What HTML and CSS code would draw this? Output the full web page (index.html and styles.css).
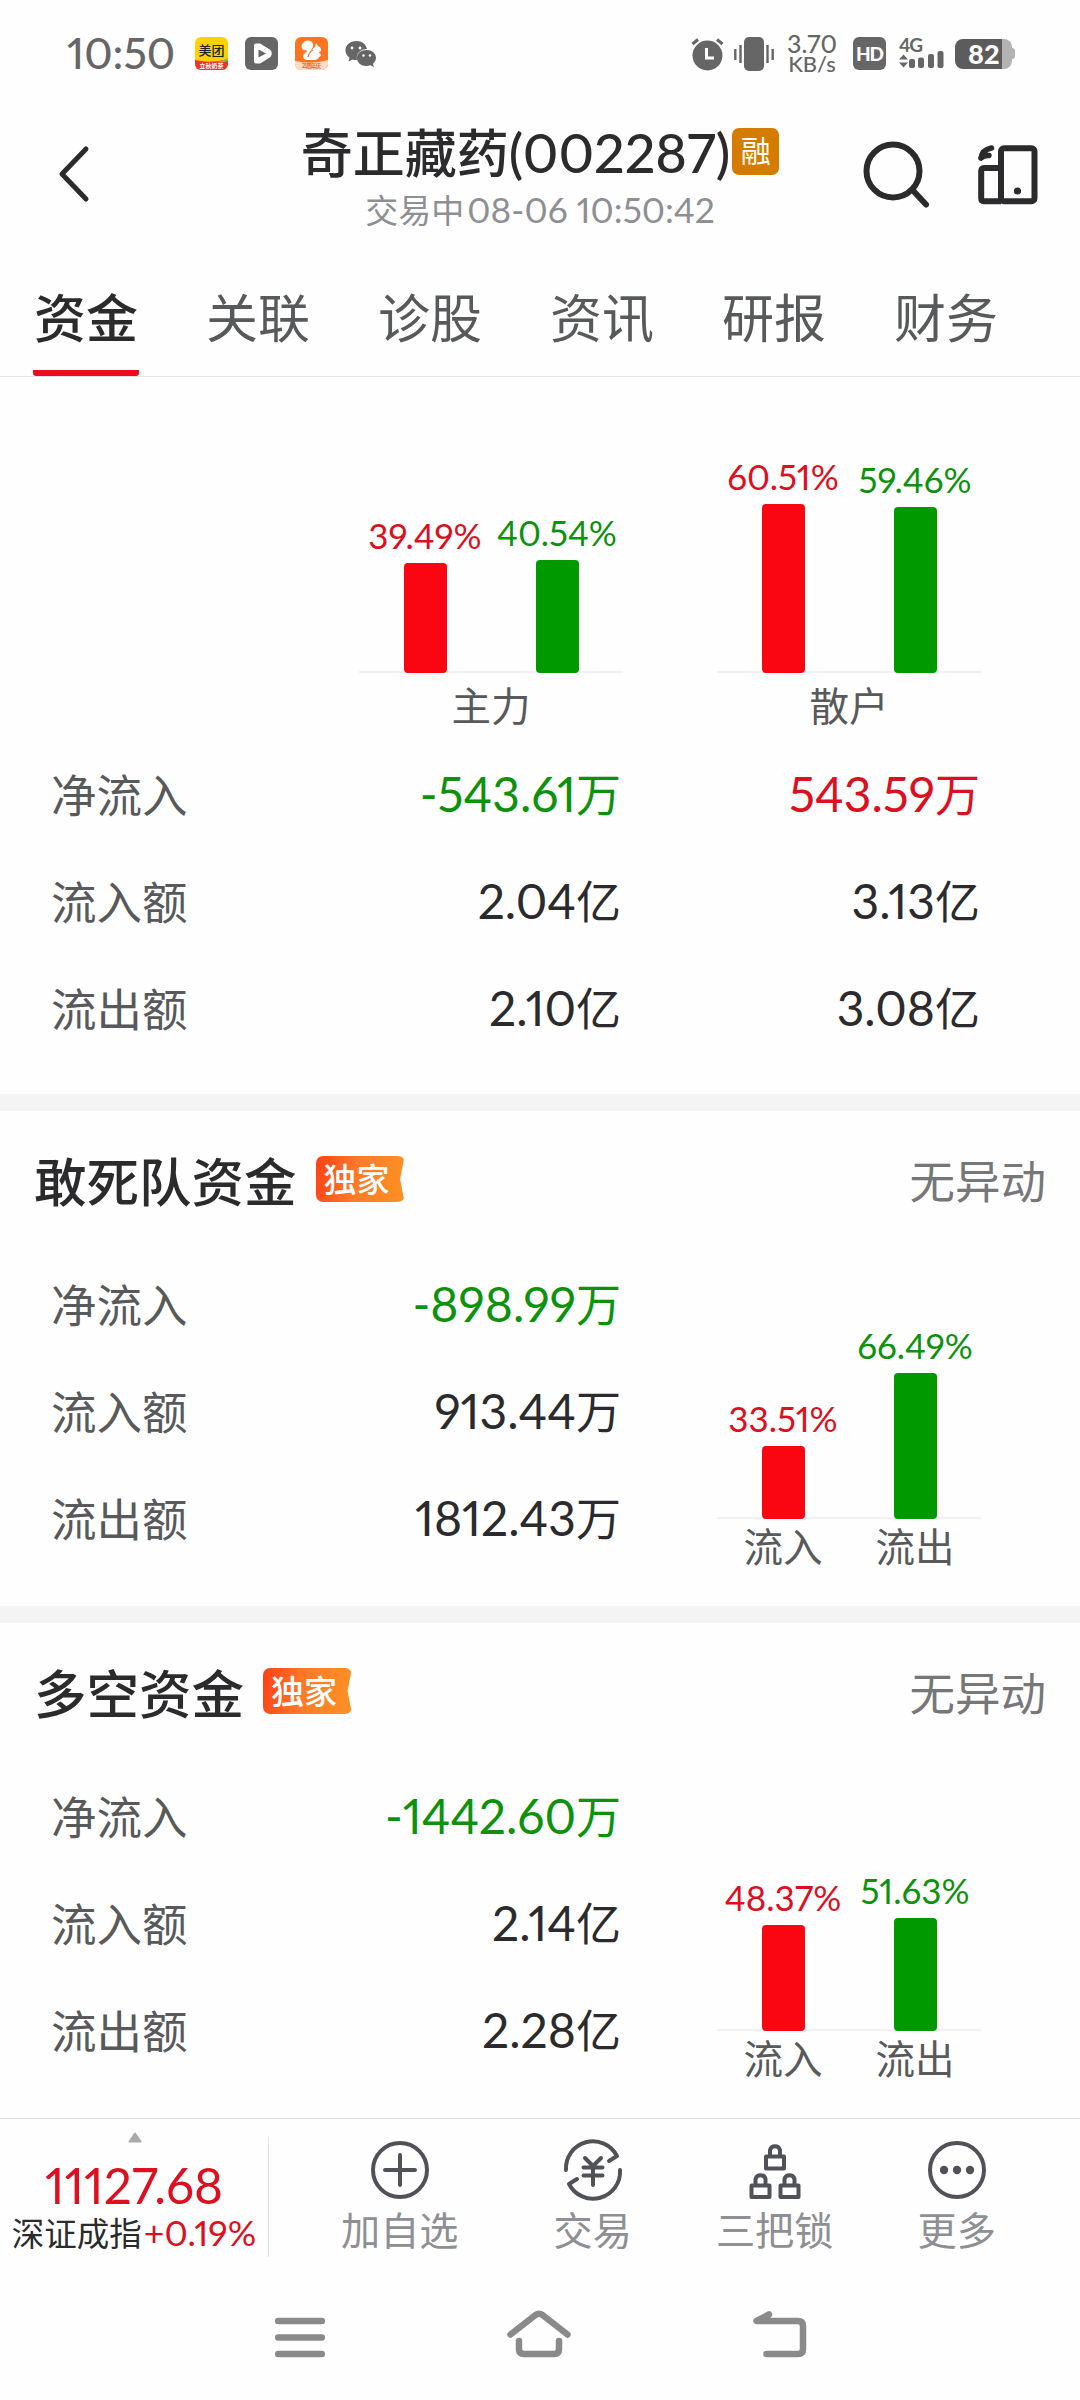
FILE: index.html
```html
<!DOCTYPE html>
<html lang="zh-CN">
  <head>
    <meta charset="UTF-8" />
    <meta name="viewport" content="width=device-width, initial-scale=1.0" />
    <title>奇正藏药(002287)</title>
    <link rel="stylesheet" href="styles.css">
  </head>
  <body>
    <div class="status-bar">
      <span class="clock">10:50</span>
      <div class="status-apps">
        <svg width="33" height="33" viewBox="0 0 33 33">
          <defs>
            <clipPath id="appClip"><rect width="33" height="33" rx="6" /></clipPath>
          </defs>
          <g clip-path="url(#appClip)">
            <rect width="33" height="33" fill="#ffd100" />
            <path d="M0 23 Q16 27 33 22 V33 H0Z" fill="#e8342a" />
            <path d="M20 25 Q28 24 33 21 V24 Q28 26 20 25Z" fill="#7cc04b" />
          </g>
          <text class="cjk" x="16.5" y="18" font-size="13" font-weight="500" text-anchor="middle" fill="#222">美团</text>
          <text class="cjk" x="16.5" y="31" font-size="6" font-weight="700" text-anchor="middle" fill="#fff">立秋奶茶</text>
        </svg>
        <svg width="33" height="33" viewBox="0 0 33 33">
          <rect width="33" height="33" rx="6" fill="#666" />
          <path d="M11 8.500 L14.500 8.500 L24 14.500 Q25.500 16.500 24 18.500 L14.500 24.500 L11 24.500Z" fill="#fff" stroke="#fff" stroke-width="4" stroke-linejoin="round" />
          <path d="M13.500 12.500 L21 16.500 L13.500 20.500Z" fill="#666" />
        </svg>
        <svg width="33" height="33" viewBox="0 0 33 33">
          <g clip-path="url(#appClip)">
            <rect width="33" height="33" fill="#ff7420" />
            <path d="M0 24 Q16 28 33 23 V33 H0Z" fill="#fcdcc8" />
          </g>
          <path d="M13 23 C9 23 7 20 9 17 C11 15 13 14 11 13 C7 14 5 9 8 6 C11 2 17 3 18 7 C19 11 15 13 15 16 C17 12 19 11 20 10 L21 6 L23 9 C27 11 27 15 23 16 C26 20 23 23 19 23 Z" fill="#fff" />
          <path d="M13 20 Q14 15 18 13" fill="none" stroke="#ff7420" stroke-width="1.200" />
          <path d="M24 16 V20 M22 18 H26" stroke="#fff" stroke-width="1.500" />
          <text class="cjk" x="16.5" y="31" font-size="5.500" font-weight="700" text-anchor="middle" fill="#e8681c" textLength="19">21周年庆</text>
        </svg>
        <svg class="wechat" width="32" height="28" viewBox="0 0 32 28">
          <path d="M11.500 1 C5 1 .5 5 .5 10.500 C.5 13.500 2 16 4.500 17.800 L3.500 21.500 L7.500 19.500 Q10 20.300 12 20 A10 9 0 0 1 22 9 C21 4 17 1 11.500 1Z" fill="#666" />
          <path d="M21.500 10 C16 10 12 13.500 12 18 C12 22.500 16 26 21.500 26 Q23.500 26 25.500 25.300 L28.800 27 L28 23.800 Q31 21.500 31 18 C31 13.500 27 10 21.500 10Z" fill="#666" />
          <g fill="#fff">
            <circle cx="7" cy="8" r="1.400" /><circle cx="15" cy="8" r="1.400" />
            <circle cx="18.500" cy="15.500" r="1.200" /><circle cx="25" cy="15.500" r="1.200" />
          </g>
        </svg>
      </div>
      <div class="status-system">
        <svg class="alarm" width="33" height="34" viewBox="0 0 33 34">
          <circle cx="16.500" cy="18.500" r="15" fill="#666" />
          <path d="M1.500 7 L7 2.500 M31.500 7 L26 2.500" stroke="#666" stroke-width="3" />
          <path d="M15.500 11 V21 H23" fill="none" stroke="#fff" stroke-width="3" />
        </svg>
        <svg class="vibrate" width="40" height="34" viewBox="0 0 40 34">
          <rect x="10" y="0" width="20" height="34" rx="5" fill="#666" />
          <path d="M1.300 12 V23 M6.500 8 V26 M33.500 8 V26 M38.700 12 V23" stroke="#666" stroke-width="2.400" />
        </svg>
        <div class="net-speed">
          <span class="speed-value">3.70</span>
          <span>KB/s</span>
        </div>
        <span class="hd">HD</span>
        <svg class="signal" width="45" height="34" viewBox="0 0 45 34">
          <text x="0" y="15" font-size="19" font-weight="700" textLength="24" fill="#666">4G</text>
          <path d="M0 22.500 L4.500 17.500 L9 22.500Z M0 25.500 L4.500 30.500 L9 25.500Z" fill="#666" />
          <g fill="#666">
            <rect x="10" y="22" width="6" height="9" rx="2" />
            <rect x="19" y="20.500" width="6" height="10.500" rx="2" />
            <rect x="29" y="17" width="6" height="14" rx="2" />
            <rect x="38.500" y="14" width="6" height="17" rx="2" />
          </g>
        </svg>
        <div class="battery"><span>82</span></div>
      </div>
    </div>

    <div class="header">
      <svg class="back" width="32" height="58" viewBox="0 0 32 58">
        <path d="M28 4 L4 29 L28 54" fill="none" stroke="#2b2b2d" stroke-width="5" stroke-linecap="round" stroke-linejoin="round" />
      </svg>
      <div class="title-block">
        <div class="title">
          <span>奇正藏药</span><span class="code">(002287)</span><span class="margin-tag">融</span>
        </div>
        <div class="subtitle">交易中<span>08-06 10:50:42</span></div>
      </div>
      <div class="header-actions">
        <svg width="68" height="70" viewBox="0 0 68 70">
          <circle cx="30" cy="31" r="26.500" fill="none" stroke="#2b2b2d" stroke-width="6" />
          <path d="M50 50.500 L63 64.500" stroke="#2b2b2d" stroke-width="6" stroke-linecap="round" />
        </svg>
        <svg width="60" height="60" viewBox="0 0 60 60">
          <rect x="23" y="3.200" width="33.500" height="53" rx="3" fill="none" stroke="#2b2b2d" stroke-width="6" />
          <path d="M23 23 H6 Q3.200 23 3.200 26 V53 Q3.200 56.200 6 56.200 H23" fill="none" stroke="#2b2b2d" stroke-width="6" />
          <path d="M13.500 3 Q4 5 3 13 M11 10.500 Q6 10 3 13" fill="none" stroke="#2b2b2d" stroke-width="5.500" stroke-linecap="round" />
          <circle cx="39.500" cy="46" r="3.600" fill="#2b2b2d" />
        </svg>
      </div>
    </div>

    <div class="tabs">
      <span class="tab active">资金</span>
      <span class="tab">关联</span>
      <span class="tab">诊股</span>
      <span class="tab">资讯</span>
      <span class="tab">研报</span>
      <span class="tab">财务</span>
    </div>

    <div class="section overview">
      <div class="chart-pair">
        <div class="chart">
          <div class="bars">
            <div class="bar-col red"><span>39.49%</span><div class="bar" style="height: 110px"></div></div>
            <div class="bar-col green"><span>40.54%</span><div class="bar" style="height: 113px"></div></div>
          </div>
          <div class="captions"><span>主力</span></div>
        </div>
        <div class="chart">
          <div class="bars">
            <div class="bar-col red"><span>60.51%</span><div class="bar" style="height: 169px"></div></div>
            <div class="bar-col green"><span>59.46%</span><div class="bar" style="height: 166px"></div></div>
          </div>
          <div class="captions"><span>散户</span></div>
        </div>
      </div>
      <div class="row">
        <span class="label">净流入</span>
        <span class="value green"><b>-543.61</b>万</span>
        <span class="value red"><b>543.59</b>万</span>
      </div>
      <div class="row">
        <span class="label">流入额</span>
        <span class="value"><b>2.04</b>亿</span>
        <span class="value"><b>3.13</b>亿</span>
      </div>
      <div class="row">
        <span class="label">流出额</span>
        <span class="value"><b>2.10</b>亿</span>
        <span class="value"><b>3.08</b>亿</span>
      </div>
    </div>

    <div class="section">
      <div class="section-head">
        <h2>敢死队资金</h2>
        <span class="exclusive">独家</span>
        <span class="state">无异动</span>
      </div>
      <div class="section-body">
        <div class="rows">
          <div class="row"><span class="label">净流入</span><span class="value green"><b>-898.99</b>万</span></div>
          <div class="row"><span class="label">流入额</span><span class="value"><b>913.44</b>万</span></div>
          <div class="row"><span class="label">流出额</span><span class="value"><b>1812.43</b>万</span></div>
        </div>
        <div class="chart">
          <div class="bars">
            <div class="bar-col red"><span>33.51%</span><div class="bar" style="height: 73px"></div></div>
            <div class="bar-col green"><span>66.49%</span><div class="bar" style="height: 146px"></div></div>
          </div>
          <div class="captions"><span>流入</span><span>流出</span></div>
        </div>
      </div>
    </div>

    <div class="section">
      <div class="section-head">
        <h2>多空资金</h2>
        <span class="exclusive">独家</span>
        <span class="state">无异动</span>
      </div>
      <div class="section-body">
        <div class="rows">
          <div class="row"><span class="label">净流入</span><span class="value green"><b>-1442.60</b>万</span></div>
          <div class="row"><span class="label">流入额</span><span class="value"><b>2.14</b>亿</span></div>
          <div class="row"><span class="label">流出额</span><span class="value"><b>2.28</b>亿</span></div>
        </div>
        <div class="chart">
          <div class="bars">
            <div class="bar-col red"><span>48.37%</span><div class="bar" style="height: 106px"></div></div>
            <div class="bar-col green"><span>51.63%</span><div class="bar" style="height: 113px"></div></div>
          </div>
          <div class="captions"><span>流入</span><span>流出</span></div>
        </div>
      </div>
    </div>

    <div class="toolbar">
      <div class="index">
        <svg width="14" height="11" viewBox="0 0 14 11"><path d="M7 1.500 L12.500 9.500 H1.500Z" fill="#aaa" stroke="#aaa" stroke-width="2" stroke-linejoin="round" /></svg>
        <span class="index-value">11127.68</span>
        <span class="index-name">深证成指<b>+0.19%</b></span>
      </div>
      <div class="tools">
        <div class="tool add">
          <svg width="60" height="60" viewBox="0 0 60 60">
            <circle cx="30" cy="30" r="27" />
            <path d="M30 15 V45 M15 30 H45" />
          </svg>
          <span>加自选</span>
        </div>
        <div class="tool">
          <svg width="60" height="60" viewBox="0 0 60 60">
            <path d="M3 30 A27 27 0 0 1 54 16 L46 21" />
            <path d="M57 30 A27 27 0 0 1 6 44 L14 39" />
            <path d="M22 18 L30 26 L38 18 M30 26 V45 M20.500 27.500 H39.500 M20.500 35.500 H39.500" />
          </svg>
          <span>交易</span>
        </div>
        <div class="tool">
          <svg width="60" height="60" viewBox="0 0 60 60">
            <path d="M21 16.500 H39 V28.500 H21Z M25 16 V10 A5.200 5.200 0 0 1 35 10 V16" />
            <path d="M6.500 45.500 H24.500 V57 H6.500Z M10.500 45 V39 A5.200 5.200 0 0 1 20.500 39 V45" />
            <path d="M35.500 45.500 H53.500 V57 H35.500Z M39.500 45 V39 A5.200 5.200 0 0 1 49.500 39 V45" />
          </svg>
          <span>三把锁</span>
        </div>
        <div class="tool">
          <svg width="60" height="60" viewBox="0 0 60 60">
            <circle cx="30" cy="30" r="27" />
            <g class="dots"><circle cx="17" cy="30" r="4.200" /><circle cx="30" cy="30" r="4.200" /><circle cx="43" cy="30" r="4.200" /></g>
          </svg>
          <span>更多</span>
        </div>
      </div>
    </div>

    <div class="nav-bar">
      <svg width="50" height="50" viewBox="0 0 50 50">
        <path d="M3.200 11 H46.800 M3.200 27.500 H46.800 M3.200 44 H46.800" />
      </svg>
      <svg width="64" height="50" viewBox="0 0 64 50">
        <path d="M3.500 24.500 L28.500 5 Q32 2.500 35.500 5 L60.500 24.500" />
        <path d="M12 31 V39 Q12 44 17 44 H47 Q52 44 52 39 V31" />
      </svg>
      <svg width="54" height="50" viewBox="0 0 54 50">
        <path d="M16 4.500 L3.500 11 H45 Q50 11 50 16 V39 Q50 44 45 44 H13.500" />
      </svg>
    </div>
  </body>
</html>
```
FILE: styles.css
```css
body {
  margin: 0;
  width: 1080px;
  height: 2400px;
  overflow: hidden;
  background: #fefefe;
  color: #2b2b2d;
  font-family: Lato, "Noto Sans CJK SC", sans-serif;
  font-variant-numeric: proportional-nums;
}
svg {
  display: block;
  flex: none;
  overflow: visible;
}
b {
  font-weight: normal;
}
.cjk {
  font-family: "Noto Sans CJK SC", sans-serif;
}
.red {
  color: #dc1020;
}
.green {
  color: #0e920e;
}

/* status bar */
.status-bar {
  display: flex;
  align-items: center;
  height: 107px;
  padding: 0 68px 0 67px;
  color: #666;
}
.clock {
  width: 128px;
  font-size: 43px;
  font-weight: 500;
  line-height: 44px;
  padding-bottom: 2px;
}
.status-apps {
  display: flex;
  align-items: center;
  gap: 17px;
}
.status-system {
  display: flex;
  align-items: center;
  margin-left: auto;
}
.alarm {
  margin-right: 10px;
}
.vibrate {
  margin-right: 11px;
}
.net-speed {
  display: flex;
  flex-direction: column;
  align-items: center;
  width: 54px;
  margin-right: 14px;
  font-size: 22px;
  font-weight: 500;
  line-height: 20px;
}
.speed-value {
  font-size: 25px;
  line-height: 20px;
  padding-bottom: 1px;
}
.hd {
  width: 33px;
  height: 33px;
  margin-right: 13px;
  border-radius: 6px;
  background: #666;
  color: #fff;
  font-size: 19px;
  font-weight: 900;
  line-height: 33px;
  text-align: center;
  letter-spacing: -1px;
}
.signal {
  margin-right: 11px;
}
.battery {
  display: flex;
  align-items: center;
  width: 57px;
  height: 30px;
  border-radius: 8px;
  background: linear-gradient(90deg, #5c5c5c 47px, #b3b3b3 47px);
  color: #fff;
  font-size: 27px;
  font-weight: 900;
}
.battery span {
  padding-left: 13px;
}
.battery::after {
  content: "";
  width: 4px;
  height: 11px;
  margin-left: auto;
  margin-right: -3px;
  border-radius: 0 3px 3px 0;
  background: #b3b3b3;
}

/* header */
.header {
  display: grid;
  grid-template-columns: 220px 1fr 220px;
  height: 143px;
}
.back {
  margin: 38px 0 0 58px;
}
.title-block {
  display: flex;
  flex-direction: column;
  align-items: center;
  padding-top: 16px;
}
.title {
  display: flex;
  align-items: center;
  height: 60px;
  font-size: 52px;
  font-weight: 500;
  line-height: 60px;
}
.code {
  font-size: 54px;
}
.margin-tag {
  width: 47px;
  height: 47px;
  margin: -3px 0 0 2px;
  border-radius: 7px;
  background: #d57c00;
  color: #fff;
  font-size: 30px;
  font-weight: 400;
  line-height: 45px;
  text-align: center;
}
.subtitle {
  margin-top: 7px;
  color: #8e8f93;
  font-size: 33px;
  line-height: 40px;
}
.subtitle span {
  margin-left: 3px;
  font-size: 35.3px;
}
.header-actions {
  display: flex;
  align-items: center;
  height: 135px;
  padding-left: 3px;
  gap: 47px;
}

/* tabs */
.tabs {
  display: flex;
  gap: 66px;
  height: 126px;
  padding-left: 33px;
  border-bottom: 1px solid #e4e4e4;
}
.tab {
  display: flex;
  align-items: center;
  justify-content: center;
  width: 106px;
  padding-top: 9px;
  border-radius: 3px;
  box-sizing: border-box;
  color: #58595b;
  font-size: 52px;
  line-height: 60px;
}
.tab.active {
  background: linear-gradient(#ee0c18, #ee0c18) bottom / 100% 6px no-repeat;
  color: #2b2b2d;
  font-weight: 500;
}

/* sections */
.section {
  height: 495px;
  border-bottom: 17px solid #f4f4f4;
}
.section.overview {
  height: 717px;
}
.section:nth-last-of-type(3) {
  border-bottom: 0;
}
.row {
  display: flex;
  align-items: center;
  height: 107px;
  padding: 0 0 4px 51px;
  box-sizing: border-box;
}
.label {
  width: 200px;
  color: #58595b;
  font-size: 45.5px;
}
.value {
  width: 370px;
  font-size: 45px;
  text-align: right;
}
.value + .value {
  width: 359px;
}
.value b {
  font-size: 48px;
}
.section-head {
  display: flex;
  align-items: center;
  height: 140px;
  padding: 0 34px 4px;
  box-sizing: border-box;
}
.section-head h2 {
  margin: 0;
  font-size: 52.5px;
  font-weight: 500;
}
.exclusive {
  width: 89px;
  height: 46px;
  margin: 0 0 0 19px;
  padding-left: 8px;
  box-sizing: border-box;
  border-radius: 7px;
  background: linear-gradient(100deg, #ff4016, #ff7a28 45%, #fb9224);
  clip-path: polygon(0 0, 100% 0, 95% 50%, 100% 100%, 0 100%);
  color: #fff;
  font-size: 33px;
  font-weight: 500;
  line-height: 46px;
}
.state {
  margin-left: auto;
  color: #777;
  font-size: 45.5px;
}
.section-body {
  display: flex;
}
.rows {
  width: 717px;
}

/* bar charts */
.chart-pair {
  display: flex;
  gap: 94px;
  height: 364px;
  padding-left: 359px;
}
.chart {
  width: 264px;
}
.bars {
  display: flex;
  align-items: flex-end;
  height: 266px;
  border-bottom: 2px solid #f1f1f1;
}
.overview .bars {
  height: 294px;
}
.bar-col {
  display: flex;
  flex-direction: column;
  align-items: center;
  width: 132px;
  margin-bottom: -2px;
  font-size: 35px;
  line-height: 36px;
}
.bar-col span {
  margin-bottom: 10px;
}
.bar {
  width: 43px;
  border-radius: 4px;
}
.red .bar {
  background: #f90612;
}
.green .bar {
  background: #009a00;
}
.captions {
  display: flex;
  justify-content: space-around;
  padding-top: 6px;
  color: #58595b;
  font-size: 39.5px;
  line-height: 44px;
}
.overview .captions {
  padding-top: 11px;
}

/* bottom toolbar */
.toolbar {
  display: flex;
  align-items: center;
  height: 155px;
  border-top: 1px solid #e2e2e2;
}
.index {
  display: flex;
  flex-direction: column;
  align-items: center;
  width: 268px;
  height: 120px;
  border-right: 1px solid #e2e2e2;
}
.index svg {
  margin: -5px 0 0 2px;
}
.index-value {
  margin-top: 18px;
  color: #dc1020;
  font-size: 49.5px;
  line-height: 48px;
}
.index-name {
  margin-top: 3px;
  font-size: 32.5px;
  line-height: 42px;
  white-space: nowrap;
}
.index-name b {
  margin-left: 2px;
  color: #dc1020;
  font-size: 35.5px;
}
.tools {
  display: flex;
  padding-left: 72px;
  gap: 84px;
}
.tool {
  display: flex;
  flex-direction: column;
  align-items: center;
  color: #8e8f93;
  font-size: 39.2px;
  line-height: 44px;
}
.tool.add {
  margin-right: 11px;
}
.tool svg {
  margin-bottom: 8px;
  padding-top: 0;
  fill: none;
  stroke: #515258;
  stroke-width: 4;
  stroke-linecap: round;
  stroke-linejoin: round;
}
.tool span {
  margin-bottom: 2px;
}
.tool .dots {
  fill: #515258;
  stroke: none;
}

/* system navigation */
.nav-bar {
  display: flex;
  justify-content: center;
  align-items: flex-start;
  gap: 182px;
  padding: 36px 0 0 2px;
}
.nav-bar svg {
  fill: none;
  stroke: #8a8a8a;
  stroke-width: 6.5;
  stroke-linecap: round;
  stroke-linejoin: round;
}
```
